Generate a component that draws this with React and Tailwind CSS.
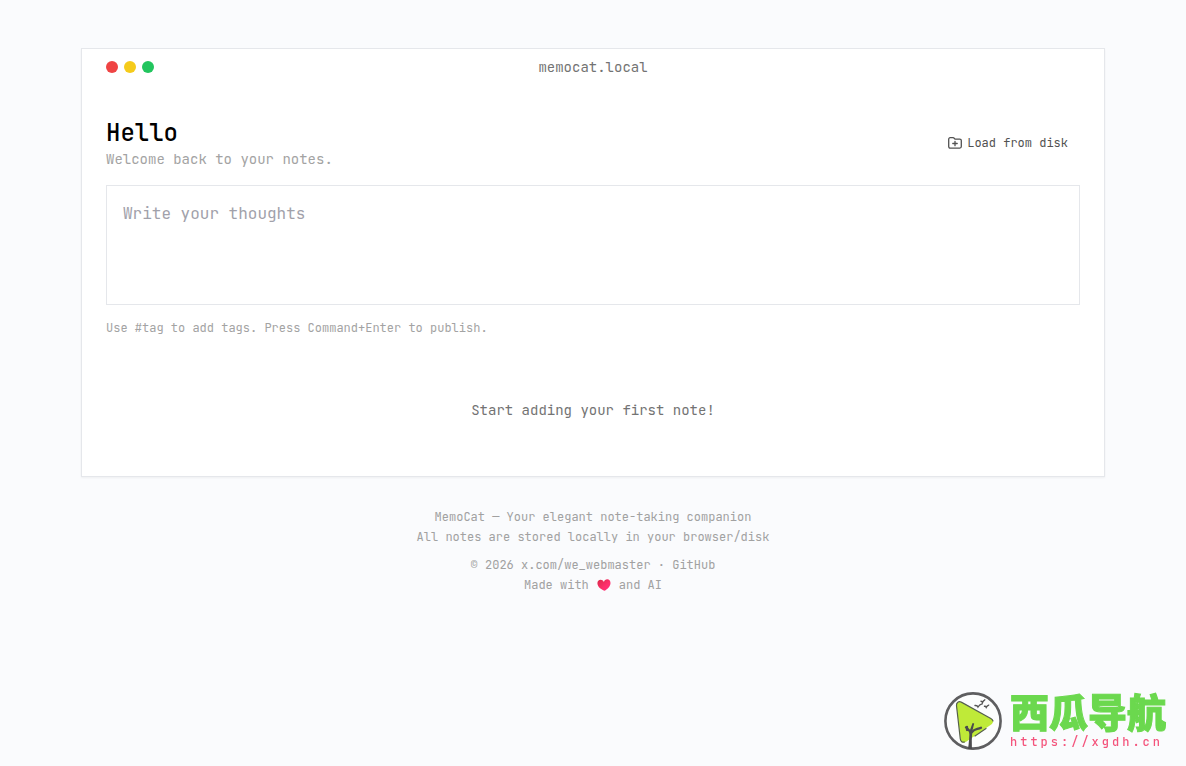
import React, { useState } from 'react';

const FolderAddIcon = () => (
    <svg
        viewBox="0 0 16 16"
        className="w-4 h-4"
        fill="none"
        stroke="currentColor"
        strokeWidth="1.3"
        strokeLinecap="round"
        strokeLinejoin="round"
        aria-hidden="true"
    >
        <path d="M1.700 4.200c0-.9.600-1.500 1.500-1.500h2.900c.4 0 .8.2 1.100.5l.8.900h4.800c.9 0 1.500.6 1.500 1.500v6c0 .9-.6 1.500-1.500 1.500H3.200c-.9 0-1.500-.6-1.500-1.500z" />
        <path d="M8 6.300v4.400M5.800 8.500h4.400" />
    </svg>
);

const HeartIcon = () => (
    <svg viewBox="0 0 16 14" className="w-4 h-3.5" role="img" aria-label="love">
        <defs>
            <linearGradient id="heart" x1="0" y1="0" x2="1" y2="1">
                <stop offset="0" stopColor="#d92a48" />
                <stop offset="0.6" stopColor="#ff2f6d" />
                <stop offset="1" stopColor="#ff2f7d" />
            </linearGradient>
        </defs>
        <path
            d="M8.500 12.800C5.200 11.600 1.500 9 1.400 5.300 1.400 3.200 2.800 1.800 4.600 1.800c1.400 0 2.600.8 3.300 2.200.5-1.700 1.700-2.700 3.300-2.700 2 0 3.300 1.500 3.300 3.600 0 3.300-2.800 6.100-6 7.900z"
            fill="url(#heart)"
        />
    </svg>
);

const WatermelonLogo = () => (
    <svg viewBox="0 0 58 58" className="w-[58px] h-[58px]" aria-hidden="true">
        <circle cx="29" cy="29" r="27.6" fill="#fcfdfd" stroke="#5e5e60" strokeWidth="2.6" />
        <path
            d="M12.500 14c0-3.500 2.300-4.800 5.200-3.300L46.500 26.500c3.400 2 3.400 4.400 0 6.400L22.500 49.500c-3.400 2-5.700 1-6-2.500z"
            fill="#bfea38"
        />
        <path
            d="M49 29c-.3-1-1-1.800-2.200-2.500L17.700 10.400c-3-1.600-5.500-.2-5.200 3.300L16.300 47c.3 2.500 2 3.700 4.300 3M31 44l11-7.500"
            fill="none"
            stroke="#55604a"
            strokeWidth="1.2"
            strokeLinecap="round"
        />
        <path d="M24 57c1-6 1.200-12 1.600-18l3-8 1.600.5-1.900 7.800c-.6 6-.6 12-.4 18z" fill="#4b4b4d" />
        <path
            d="M27 42c-.4-3.500-2.300-4-5-6.600M28 40c2.500-3.300 5.500-2.500 9-4.300M23 38v-3"
            fill="none"
            stroke="#4b4b4d"
            strokeWidth="2.300"
            strokeLinecap="round"
        />
        <path
            d="M31 13.500c1.800-.3 2.500.3 3 1.500 1-1.700 2.300-2.700 4-3.200M37 9.300c.8 0 1.300.4 1.500 1.200.5-1.400 1.200-2.200 2.300-2.700M40.500 14.300c.8-.1 1.400.3 1.700 1 .6-1.100 1.400-1.800 2.500-2.200"
            fill="none"
            stroke="#555"
            strokeWidth="1.400"
            strokeLinecap="round"
        />
    </svg>
);

const WindowBar = () => (
    <div className="grid grid-cols-3 items-center px-6 py-2">
        <div className="flex gap-1.5">
            <span className="w-3 h-3 rounded-full bg-[#ef4444]" />
            <span className="w-3 h-3 rounded-full bg-[#f5cb1b]" />
            <span className="w-3 h-3 rounded-full bg-[#22c55e]" />
        </div>
        <span className="text-center text-sm text-[#737373]">memocat.local</span>
    </div>
);

const Footer = () => (
    <footer className="pt-8 text-center text-xs text-[#a1a1a1]">
        <div className="flex flex-col gap-1">
            <p>MemoCat — Your elegant note-taking companion</p>
            <p>All notes are stored locally in your browser/disk</p>
        </div>
        <div className="flex flex-col gap-1 mt-3">
            <p>
                © 2026 <a href="#x">x.com/we_webmaster</a> · <a href="#github">GitHub</a>
            </p>
            <p className="flex items-center justify-center gap-[7px]">
                Made with <HeartIcon /> and AI
            </p>
        </div>
    </footer>
);

const App = () => {
    const [note, setNote] = useState('');

    return (
        <div className="min-h-screen bg-[#fafbfd] px-4 py-12 font-['JetBrains_Mono','DejaVu_Sans_Mono',monospace]">
            <main className="max-w-5xl mx-auto">
                <section className="bg-white border border-gray-200 shadow-xs">
                    <WindowBar />
                    <div className="px-6 pt-8 pb-14">
                        <header className="flex items-center justify-between">
                            <div>
                                <h1 className="text-2xl font-medium text-black">Hello</h1>
                                <p className="text-sm text-[#a3a3a3]">Welcome back to your notes.</p>
                            </div>
                            <button type="button" className="flex items-center gap-1 h-8 px-3 text-xs text-[#525252]">
                                <FolderAddIcon />
                                Load from disk
                            </button>
                        </header>

                        <textarea
                            aria-label="Note"
                            placeholder="Write your thoughts"
                            value={note}
                            onChange={(e) => setNote(e.target.value)}
                            className="block w-full h-[120px] mt-4 p-4 resize-none border border-gray-200 bg-white text-base outline-none placeholder:text-[#a1a1aa]"
                        />
                        <p className="mt-[15px] text-xs text-[#a3a3a3]">
                            Use #tag to add tags. Press Command+Enter to publish.
                        </p>

                        <p className="mt-16 text-center text-sm text-[#737373]">Start adding your first note!</p>
                    </div>
                </section>
                <Footer />
            </main>

            <a href="#xgdh" className="fixed right-5 bottom-4 flex items-end gap-2">
                <WatermelonLogo />
                <span className="flex flex-col gap-1">
                    <span className="font-['Noto_Sans_CJK_SC',sans-serif] text-[39px] leading-10 font-black text-[#6bd84e] [-webkit-text-stroke:1px_#6bd84e]">
                        西瓜导航
                    </span>
                    <span className="text-xs leading-4 font-medium tracking-[3px] text-[#f4547c]">https://xgdh.cn</span>
                </span>
            </a>
        </div>
    );
};

export default App;
